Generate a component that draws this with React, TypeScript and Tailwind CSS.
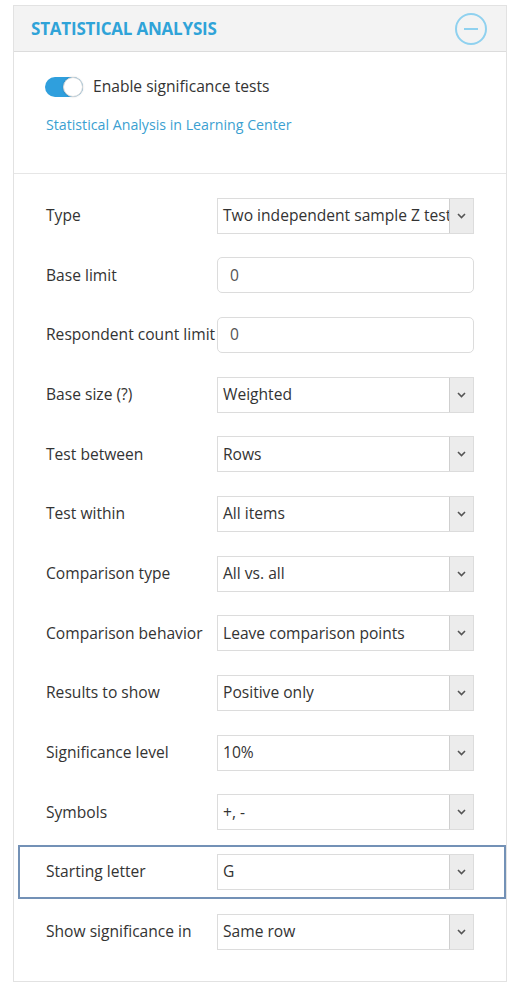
import React from "react";

type Row = {
  label: string;
  value: string;
  kind: "select" | "input";
  highlight?: boolean;
};

const rows: Row[] = [
  { label: "Type", value: "Two independent sample Z test", kind: "select" },
  { label: "Base limit", value: "0", kind: "input" },
  { label: "Respondent count limit", value: "0", kind: "input" },
  { label: "Base size (?)", value: "Weighted", kind: "select" },
  { label: "Test between", value: "Rows", kind: "select" },
  { label: "Test within", value: "All items", kind: "select" },
  { label: "Comparison type", value: "All vs. all", kind: "select" },
  { label: "Comparison behavior", value: "Leave comparison points", kind: "select" },
  { label: "Results to show", value: "Positive only", kind: "select" },
  { label: "Significance level", value: "10%", kind: "select" },
  { label: "Symbols", value: "+, -", kind: "select" },
  { label: "Starting letter", value: "G", kind: "select", highlight: true },
  { label: "Show significance in", value: "Same row", kind: "select" },
];

function Chevron() {
  return (
    <svg width="9" height="6" viewBox="0 0 9 6" fill="none">
      <path d="M1 1l3.5 3.5L8 1" stroke="#555" strokeWidth="1.6" />
    </svg>
  );
}

function SelectBox({ value }: { value: string }) {
  return (
    <div className="flex h-[36px] w-[257px] shrink-0 items-stretch border border-[#dcdcdc] bg-white">
      <div className="flex flex-1 items-center overflow-hidden whitespace-nowrap pl-[5px] text-[15.6px] text-[#333]">
        {value}
      </div>
      <div className="flex w-[24px] shrink-0 items-center justify-center border-l border-[#cfcfcf] bg-[#ececec]">
        <Chevron />
      </div>
    </div>
  );
}

function InputBox({ value }: { value: string }) {
  return (
    <div className="flex h-[36px] w-[257px] shrink-0 items-center rounded-[5px] border border-[#dcdcdc] bg-white pl-[12px] text-[15.6px] text-[#555]">
      {value}
    </div>
  );
}

export default function App() {
  return (
    <div className="min-h-[1000px] bg-white pt-[5px] font-['Open_Sans','Noto_Sans',sans-serif]">
      <div className="ml-[13px] w-[494px] border border-[#e2e2e2]">
        {/* header */}
        <div className="flex h-[46px] items-center justify-between border-b border-[#dcdcdc] bg-[#f3f3f3] pl-[17px] pr-[18px]">
          <span className="text-[17px] font-bold tracking-[-0.2px] text-[#2fa3d8]">
            STATISTICAL ANALYSIS
          </span>
          <svg width="34" height="34" viewBox="0 0 34 34" fill="none">
            <circle cx="17" cy="17" r="15" stroke="#8fd1ef" strokeWidth="2" />
            <path d="M10 17h14" stroke="#8fd1ef" strokeWidth="2" />
          </svg>
        </div>

        {/* toggle + link */}
        <div className="border-b border-[#e6e6e6] pb-[37px] pl-[31px] pt-[23px]">
          <div className="flex items-center gap-[10px]">
            <div className="relative h-[20px] w-[38px] rounded-full bg-[#2f9fdd]">
              <div className="absolute right-0 top-0 h-[20px] w-[20px] rounded-full border border-[#d8d8d8] bg-white shadow-[0_0_2px_rgba(0,0,0,0.2)]" />
            </div>
            <span className="text-[15.6px] text-[#333]">Enable significance tests</span>
          </div>
          <div className="mt-[16px] pl-[1px] text-[14.2px] text-[#3b9fd1]">
            Statistical Analysis in Learning Center
          </div>
        </div>

        {/* rows */}
        <div className="flex flex-col gap-[5.67px] pb-[22px] pl-[4px] pt-[15px]">
          {rows.map((r) => (
            <div
              key={r.label}
              className={`flex h-[54px] items-center border-2 pl-[26px] ${
                r.highlight ? "border-[#7391b6]" : "border-transparent"
              }`}
            >
              <div className="w-[171px] shrink-0 whitespace-nowrap text-[15.6px] text-[#333]">
                {r.label}
              </div>
              {r.kind === "select" ? <SelectBox value={r.value} /> : <InputBox value={r.value} />}
            </div>
          ))}
        </div>
      </div>
    </div>
  );
}
